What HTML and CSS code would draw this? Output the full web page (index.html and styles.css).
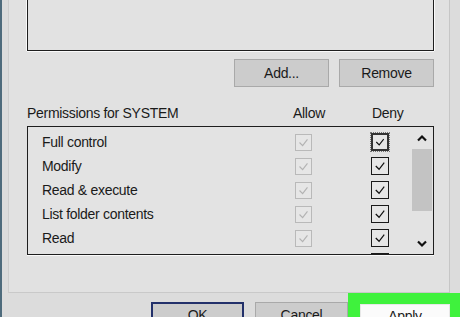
FILE: index.html
```html
<!DOCTYPE html>
<html lang="en">
<head>
    <meta charset="UTF-8">
    <meta name="viewport" content="width=device-width, initial-scale=1.0">
    <title>Security - Permissions</title>
    <link rel="stylesheet" href="styles.css">
</head>
<body>
    <div class="dialog">
        <div class="panel">
            <div class="names-box"></div>

            <div class="name-actions">
                <button class="btn">Add...</button>
                <button class="btn">Remove</button>
            </div>

            <div class="perm-header">
                <span class="perm-title">Permissions for SYSTEM</span>
                <span class="col-allow">Allow</span>
                <span class="col-deny">Deny</span>
            </div>

            <div class="perm-box">
                <div class="perm-rows">
                    <div class="perm-row">
                        <span>Full control</span>
                        <span class="check disabled"><svg viewBox="0 0 17 17"><polyline points="4,8.5 7.5,12 13,5"/></svg></span>
                        <span></span>
                        <span class="check on focus"><svg viewBox="0 0 17 17"><polyline points="4,8.5 7.5,12 13,5"/></svg></span>
                    </div>
                    <div class="perm-row">
                        <span>Modify</span>
                        <span class="check disabled"><svg viewBox="0 0 17 17"><polyline points="4,8.5 7.5,12 13,5"/></svg></span>
                        <span></span>
                        <span class="check on"><svg viewBox="0 0 17 17"><polyline points="4,8.5 7.5,12 13,5"/></svg></span>
                    </div>
                    <div class="perm-row">
                        <span>Read &amp; execute</span>
                        <span class="check disabled"><svg viewBox="0 0 17 17"><polyline points="4,8.5 7.5,12 13,5"/></svg></span>
                        <span></span>
                        <span class="check on"><svg viewBox="0 0 17 17"><polyline points="4,8.5 7.5,12 13,5"/></svg></span>
                    </div>
                    <div class="perm-row">
                        <span>List folder contents</span>
                        <span class="check disabled"><svg viewBox="0 0 17 17"><polyline points="4,8.5 7.5,12 13,5"/></svg></span>
                        <span></span>
                        <span class="check on"><svg viewBox="0 0 17 17"><polyline points="4,8.5 7.5,12 13,5"/></svg></span>
                    </div>
                    <div class="perm-row">
                        <span>Read</span>
                        <span class="check disabled"><svg viewBox="0 0 17 17"><polyline points="4,8.5 7.5,12 13,5"/></svg></span>
                        <span></span>
                        <span class="check on"><svg viewBox="0 0 17 17"><polyline points="4,8.5 7.5,12 13,5"/></svg></span>
                    </div>
                    <div class="perm-row">
                        <span></span>
                        <span class="check disabled"><svg viewBox="0 0 17 17"><polyline points="4,8.5 7.5,12 13,5"/></svg></span>
                        <span></span>
                        <span class="check on"><svg viewBox="0 0 17 17"><polyline points="4,8.5 7.5,12 13,5"/></svg></span>
                    </div>
                </div>

                <div class="scrollbar">
                    <div class="scroll-arrow">
                        <svg viewBox="0 0 12 8"><polyline points="2,6.5 6,2.5 10,6.5"/></svg>
                    </div>
                    <div class="scroll-thumb"></div>
                    <div class="scroll-track"></div>
                    <div class="scroll-arrow">
                        <svg viewBox="0 0 12 8"><polyline points="2,1.5 6,5.5 10,1.5"/></svg>
                    </div>
                </div>
            </div>
        </div>

        <div class="dialog-actions">
            <button class="btn btn-default">OK</button>
            <button class="btn">Cancel</button>
            <div class="highlight">
                <button class="btn btn-light">Apply</button>
            </div>
        </div>
    </div>
</body>
</html>
```

FILE: styles.css
```css
* {
    margin: 0;
    padding: 0;
    box-sizing: border-box;
}

html, body {
    overflow: hidden;
}

body {
    font-family: "Liberation Sans", Arial, sans-serif;
    font-size: 14px;
    letter-spacing: -0.3px;
    color: #1a1a1a;
    background: #dedede;
    width: 460px;
    height: 317px;
}

.dialog {
    height: 317px;
    overflow: hidden;
    border-left: 2px solid #4e6b7c;
    background: #dcdcdc;
}

/* tab page */
.panel {
    margin-left: 6px;
    width: 442px;
    height: 293px;
    background: #e1e1e1;
    border-left: 1px solid #cdcdcd;
    border-right: 1px solid #c6c6c6;
    border-bottom: 1px solid #c9c9c9;
    padding-left: 18px;
}

.names-box {
    width: 407px;
    height: 51px;
    border: 1px solid #1e1e1e;
    border-top: none;
    background: #e2e2e2;
    box-shadow: 0 1px 0 #fafafa, -1px 0 0 #fafafa, 1px 0 0 #fafafa;
}

.name-actions {
    width: 407px;
    display: flex;
    justify-content: flex-end;
    gap: 10px;
    margin-top: 8px;
}

.btn {
    font-family: inherit;
    font-size: 14px;
    letter-spacing: -0.3px;
    color: #1a1a1a;
    background: #cccccc;
    border: 1px solid #a9a9a9;
    width: 95px;
    height: 28px;
}

.perm-header {
    display: grid;
    grid-template-columns: 266px 79px 62px;
    width: 407px;
    margin-top: 17px;
    height: 20px;
    line-height: 18px;
}

.perm-box {
    display: flex;
    width: 407px;
    height: 129px;
    margin-top: 2px;
    border: 1px solid #1e1e1e;
    background: #e3e3e3;
    box-shadow: 0 1px 0 #fafafa;
    overflow: hidden;
}

.perm-rows {
    flex: 1;
    padding: 3px 0 0 14px;
}

.perm-row {
    display: grid;
    grid-template-columns: 253px 17px 59px 18px;
    align-items: center;
    height: 24px;
}

.check {
    display: block;
    width: 17px;
    height: 17px;
    border: 1px solid #b9b9b9;
    background: #e6e6e6;
}

.check svg {
    display: block;
    width: 100%;
    height: 100%;
    fill: none;
    stroke-width: 1.3;
}

.check.disabled svg {
    stroke: #b3b3b3;
}

.check.on {
    width: 18px;
    height: 18px;
    border-color: #1a1a1a;
}

.check.on svg {
    stroke: #111;
}

.check.focus {
    border: 2px solid #333;
    outline: 1px dotted #777;
}

.scrollbar {
    width: 20px;
    margin-right: 1px;
    display: flex;
    flex-direction: column;
}

.scroll-arrow {
    height: 21px;
    display: flex;
    align-items: center;
    justify-content: center;
}

.scroll-arrow svg {
    width: 12px;
    height: 8px;
    fill: none;
    stroke: #111;
    stroke-width: 2.2;
}

.scroll-thumb {
    height: 62px;
    margin-top: 1px;
    background: #c3c3c3;
}

.scroll-track {
    flex: 1;
}

.dialog-actions {
    display: flex;
    justify-content: flex-end;
    align-items: flex-start;
    padding-top: 9px;
}

.dialog-actions .btn {
    height: 26px;
    width: 93px;
}

.dialog-actions .btn + .btn {
    margin-left: 11px;
}

.btn-default {
    border: 2px solid #22306a;
}

.highlight {
    margin-top: -9px;
    width: 112px;
    height: 40px;
    background: #3ff23d;
    padding: 11px 0 0 12px;
}

.highlight .btn-light {
    width: 90px;
    height: 24px;
    background: #fbfbfb;
    border-color: #e8e8e8;
}
```
